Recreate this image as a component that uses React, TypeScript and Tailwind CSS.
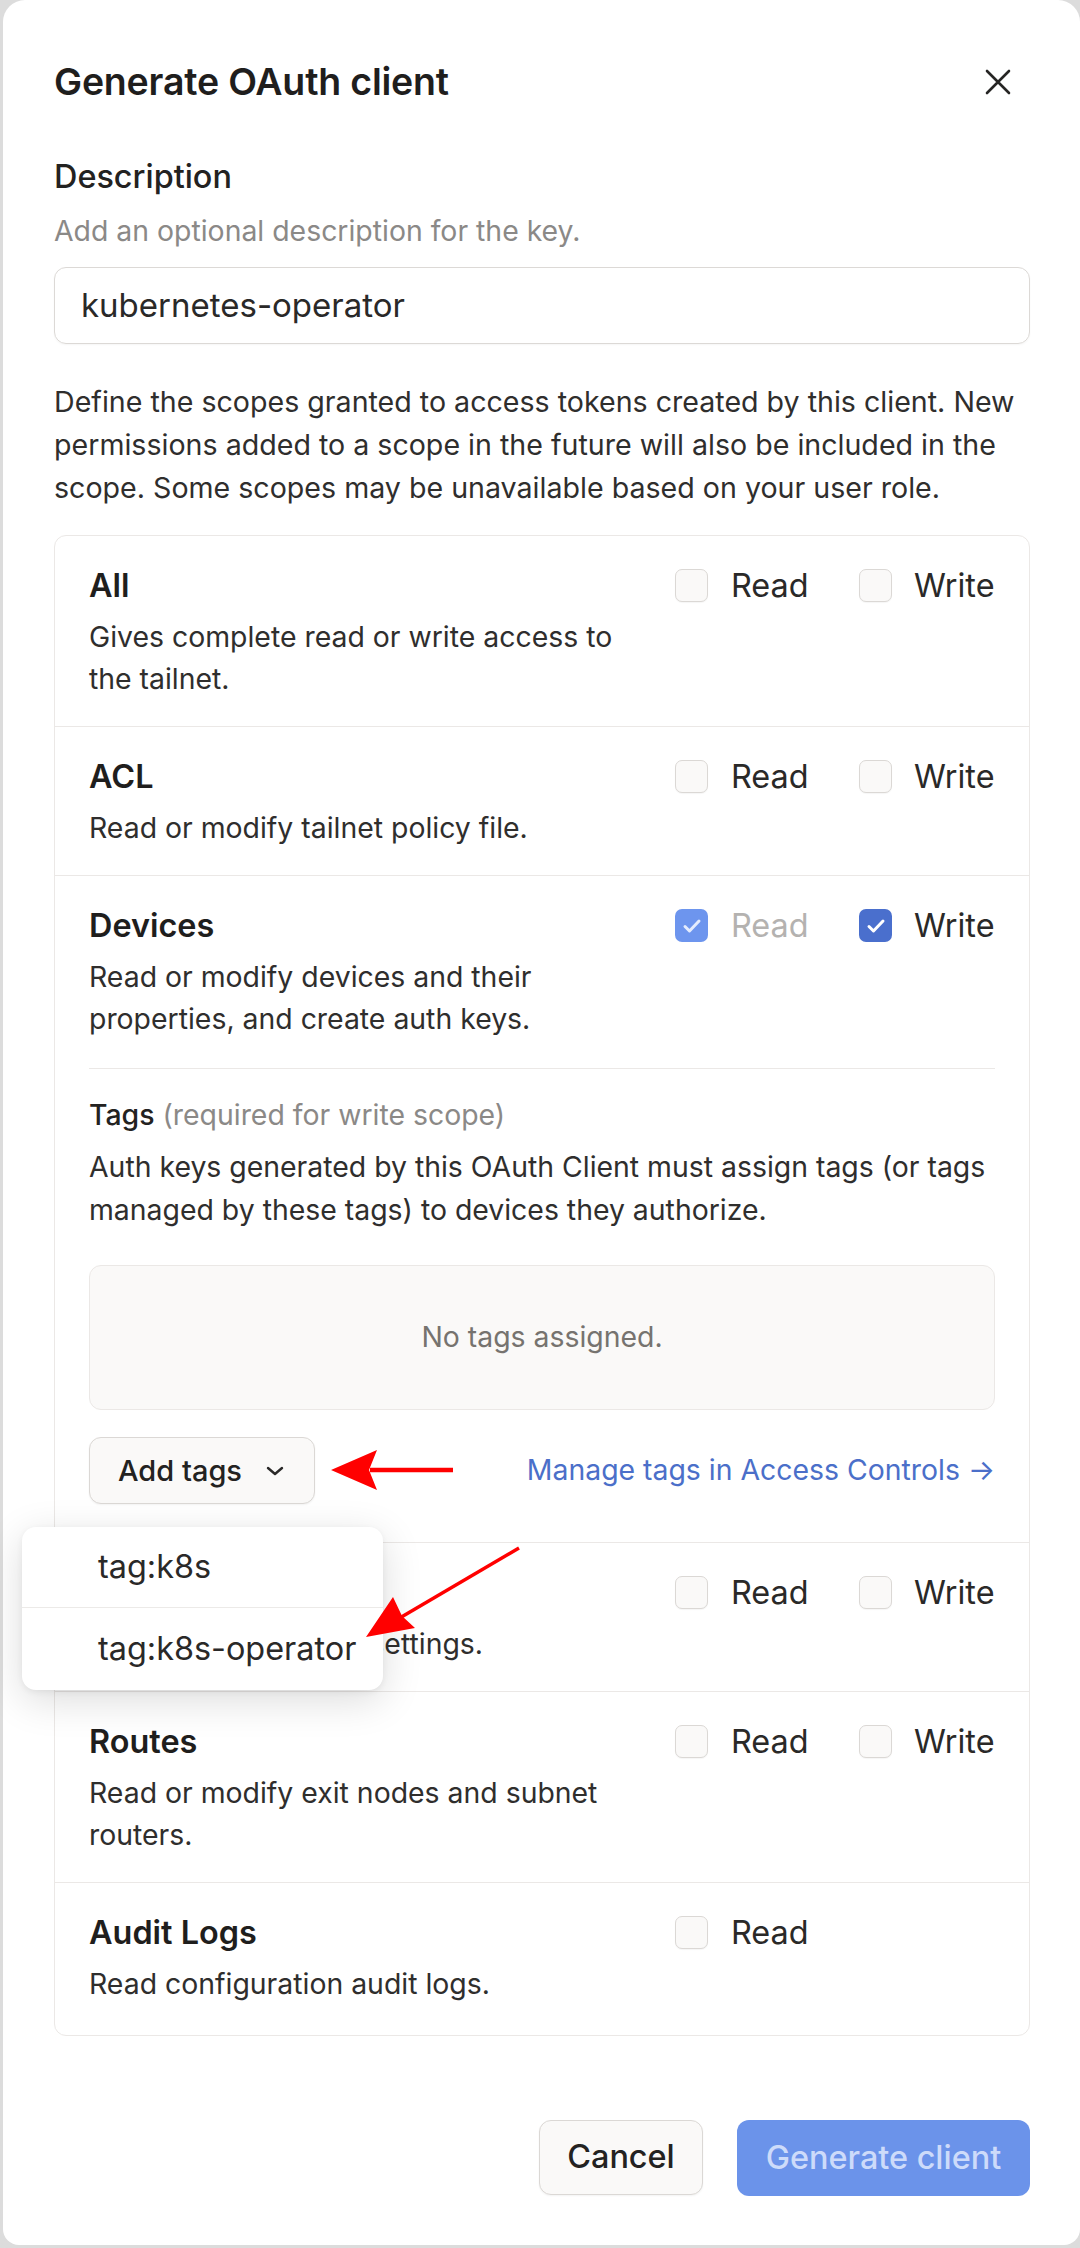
import React from "react";

const Check = ({ checked, disabled }: { checked?: boolean; disabled?: boolean }) => {
  if (checked) {
    return (
      <div
        className={`w-[33px] h-[33px] shrink-0 rounded-[7px] flex items-center justify-center ${
          disabled ? "bg-[#6d95ee]" : "bg-[#4a6fcd]"
        }`}
      >
        <svg width="24" height="24" viewBox="0 0 24 24" fill="none">
          <path
            d="M5 12.5l4.5 4.5L19 7"
            stroke={disabled ? "#e4ecfd" : "#ffffff"}
            strokeWidth="3"
            strokeLinecap="round"
            strokeLinejoin="round"
          />
        </svg>
      </div>
    );
  }
  return (
    <div className="w-[33px] h-[33px] shrink-0 rounded-[7px] border-[1.5px] border-[#dbd8d5] bg-[#faf9f8] shadow-[0_1px_1px_rgba(0,0,0,0.04)]" />
  );
};

type RowProps = {
  title: string;
  desc: string;
  read?: boolean;
  write?: boolean;
  readDisabled?: boolean;
  noWrite?: boolean;
  last?: boolean;
  children?: React.ReactNode;
};

function ScopeRow({ title, desc, read, write, readDisabled, noWrite, last, children }: RowProps) {
  return (
    <div className={`px-[34px] pt-[28px] ${last ? "pb-[30px]" : "pb-[26px] border-b border-[#ebe8e6]"}`}>
      <div className="flex">
        <div className="w-[586px]">
          <div className="text-[32.4px] leading-[43px] font-semibold text-[#1f1e1d]">{title}</div>
          <div className="mt-[9px] w-[550px] text-[28.4px] leading-[42px] text-[#2f2e2d]">{desc}</div>
        </div>
        <div className="w-[184px] h-[43px] flex items-center gap-[23px]">
          <Check checked={read} disabled={readDisabled} />
          <span className={`text-[32.4px] leading-[43px] ${readDisabled ? "text-[#b4b2b0]" : "text-[#2a2928]"}`}>
            Read
          </span>
        </div>
        {noWrite ? (
          <div className="w-[135px]" />
        ) : (
          <div className="w-[135px] h-[43px] flex items-center gap-[22px]">
            <Check checked={write} />
            <span className="text-[32.4px] leading-[43px] text-[#2a2928]">Write</span>
          </div>
        )}
      </div>
      {children}
    </div>
  );
}

export default function App() {
  return (
    <div className="relative w-[1080px] h-[2248px] bg-[#dcdcdc] overflow-hidden font-['Inter',sans-serif]">
      <div className="relative ml-[3px] w-[1077px] h-[2245px] bg-white rounded-t-[22px] rounded-b-[16px] pl-[51px] pr-[50px] pt-[58px] flex flex-col">
        {/* Header */}
        <div className="flex items-center justify-between h-[48px]">
          <h1 className="text-[37.5px] leading-[48px] font-semibold text-[#1f1e1d] tracking-[-0.2px]">
            Generate OAuth client
          </h1>
          <svg width="26" height="26" viewBox="0 0 26 26" className="mr-[19px]" fill="none">
            <path d="M2 2L24 24M24 2L2 24" stroke="#262524" strokeWidth="2.6" strokeLinecap="round" />
          </svg>
        </div>

        {/* Description */}
        <div className="mt-[49px] text-[32.4px] leading-[43px] font-medium text-[#232221]">Description</div>
        <div className="mt-[11px] text-[28.4px] leading-[43px] text-[#8b8987]">
          Add an optional description for the key.
        </div>
        <div className="mt-[15px] w-[976px] h-[77px] rounded-[12px] border-[1.5px] border-[#dcd9d6] flex items-center pl-[26px] shadow-[0_1px_2px_rgba(0,0,0,0.04)]">
          <span className="text-[33px] text-[#2a2928]">kubernetes-operator</span>
        </div>

        <p className="mt-[36px] w-[976px] text-[28.6px] leading-[43px] text-[#2f2e2d]">
          Define the scopes granted to access tokens created by this client. New permissions added to a scope in the
          future will also be included in the scope. Some scopes may be unavailable based on your user role.
        </p>

        {/* Scopes card */}
        <div className="mt-[26px] w-[976px] rounded-[12px] border border-[#ebe8e6]">
          <ScopeRow title="All" desc="Gives complete read or write access to the tailnet." />
          <ScopeRow title="ACL" desc="Read or modify tailnet policy file." />
          <ScopeRow
            title="Devices"
            desc="Read or modify devices and their properties, and create auth keys."
            read
            readDisabled
            write
          >
            <div className="mt-[28px] border-t border-[#ebe8e6] pt-[24px] mb-[12px]">
              <div className="text-[28.4px] leading-[43px]">
                <span className="font-medium text-[#232221]">Tags</span>{" "}
                <span className="text-[#8b8987]">(required for write scope)</span>
              </div>
              <div className="mt-[9px] text-[28.4px] leading-[43px] text-[#2f2e2d]">
                Auth keys generated by this OAuth Client must assign tags (or tags managed by these tags) to devices
                they authorize.
              </div>
              <div className="mt-[34px] h-[145px] rounded-[12px] border border-[#ebe8e6] bg-[#faf9f8] flex items-center justify-center">
                <span className="text-[28.4px] text-[#76736f]">No tags assigned.</span>
              </div>
              <div className="mt-[27px] flex items-center justify-between">
                <div className="relative">
                  <div className="w-[226px] h-[67px] rounded-[12px] border-[1.5px] border-[#dbd8d5] bg-[#faf9f8] flex items-center pl-[28px] shadow-[0_1px_2px_rgba(0,0,0,0.05)]">
                    <span className="text-[29px] font-medium text-[#232221]">Add tags</span>
                    <svg width="22" height="14" viewBox="0 0 22 14" className="ml-[22px]" fill="none">
                      <path d="M4 4l7 6 7-6" stroke="#2a2928" strokeWidth="2.4" strokeLinecap="round" strokeLinejoin="round" />
                    </svg>
                  </div>
                  {/* Dropdown menu */}
                  <div className="absolute left-[-67px] top-[90px] z-10 w-[361px] rounded-[14px] bg-white shadow-[0_10px_40px_rgba(0,0,0,0.14),0_2px_6px_rgba(0,0,0,0.06)] overflow-hidden">
                    <div className="h-[81px] flex items-center pl-[76px] border-b border-[#eceae8]">
                      <span className="text-[32.4px] text-[#2a2928]">tag:k8s</span>
                    </div>
                    <div className="h-[82px] flex items-center pl-[76px]">
                      <span className="text-[32.4px] text-[#2a2928]">tag:k8s-operator</span>
                    </div>
                  </div>
                </div>
                <span className="text-[28.4px] text-[#4b6fc9]">Manage tags in Access Controls →</span>
              </div>
            </div>
          </ScopeRow>
          <ScopeRow title="DNS" desc="Read or modify DNS settings." />
          <ScopeRow title="Routes" desc="Read or modify exit nodes and subnet routers." />
          <ScopeRow title="Audit Logs" desc="Read configuration audit logs." noWrite last />
        </div>

        {/* Footer */}
        <div className="mt-[84px] flex justify-end gap-[34px]">
          <div className="w-[164px] h-[75px] rounded-[12px] border-[1.5px] border-[#dbd8d5] bg-[#faf9f8] flex items-center justify-center shadow-[0_1px_2px_rgba(0,0,0,0.05)]">
            <span className="text-[32.4px] font-medium text-[#232221]">Cancel</span>
          </div>
          <div className="w-[293px] h-[76px] rounded-[12px] bg-[#6b93ea] flex items-center justify-center">
            <span className="text-[32.4px] font-medium text-[#cddbfa]">Generate client</span>
          </div>
        </div>
      </div>

      {/* Red annotation arrows */}
      <svg className="absolute inset-0 pointer-events-none z-20" width="1080" height="2248" viewBox="0 0 1080 2248">
        <line x1="453" y1="1470" x2="370" y2="1470" stroke="#ff0000" strokeWidth="4.5" />
        <polygon points="331,1470 377,1450 369,1470 377,1490" fill="#ff0000" />
        <line x1="519" y1="1548" x2="398" y2="1619" stroke="#ff0000" strokeWidth="3.5" />
        <polygon points="366,1637 393,1597 402,1616 415,1628" fill="#ff0000" />
      </svg>
    </div>
  );
}
